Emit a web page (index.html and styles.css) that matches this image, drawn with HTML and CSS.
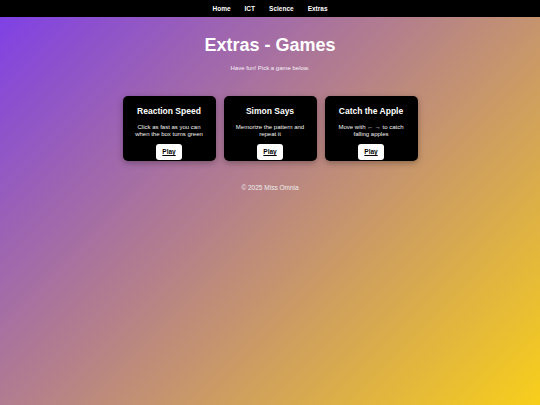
FILE: index.html
```html
<!DOCTYPE html>
<html lang="en">
<head>
<meta charset="utf-8">
<title>Extras - Games</title>
<link rel="stylesheet" href="styles.css">
</head>
<body>
<nav class="topnav">
  <a href="#" class="nav-link">Home</a>
  <a href="#" class="nav-link">ICT</a>
  <a href="#" class="nav-link">Science</a>
  <a href="#" class="nav-link">Extras</a>
</nav>
<main class="content">
  <h1 class="title">Extras - Games</h1>
  <p class="subtitle">Have fun! Pick a game below.</p>
  <section class="games">
    <div class="card">
      <h3 class="card-title">Reaction Speed</h3>
      <p class="card-text">Click as fast as you can when the box turns green</p>
      <a href="#" class="play">Play</a>
    </div>
    <div class="card">
      <h3 class="card-title">Simon Says</h3>
      <p class="card-text">Memorize the pattern and repeat it</p>
      <a href="#" class="play">Play</a>
    </div>
    <div class="card">
      <h3 class="card-title">Catch the Apple</h3>
      <p class="card-text">Move with ← → to catch falling apples</p>
      <a href="#" class="play">Play</a>
    </div>
  </section>
  <footer class="footer">© 2025 Miss Omnia</footer>
</main>
</body>
</html>
```

FILE: styles.css
```css
html, body {
  margin: 0;
  padding: 0;
}
body {
  min-height: 100vh;
  font-family: "Liberation Sans", Arial, sans-serif;
  background: linear-gradient(135deg, #7d3ee8 0%, #f7cf1a 100%);
  color: #fff;
}
.topnav {
  height: 17px;
  background: #000;
  display: flex;
  justify-content: center;
  align-items: center;
  gap: 14px;
}
.nav-link {
  color: #fff;
  font-weight: bold;
  font-size: 6.5px;
  text-decoration: none;
}
.content {
  display: flex;
  flex-direction: column;
  align-items: center;
  padding-top: 17.5px;
}
.title {
  margin: 0;
  font-size: 18px;
  line-height: 21px;
  font-weight: bold;
}
.subtitle {
  margin: 9px 0 0;
  font-size: 6px;
  line-height: 7px;
  color: #f6f2f6;
}
.games {
  margin-top: 24px;
  display: flex;
  justify-content: center;
  gap: 8px;
}
.card {
  width: 93px;
  box-sizing: border-box;
  padding: 10px 8px 1.6px;
  background: #000;
  border-radius: 5px;
  box-shadow: 0 2px 6px rgba(0, 0, 0, 0.3);
  text-align: center;
  display: flex;
  flex-direction: column;
  align-items: center;
}
.card-title {
  margin: 0 0 8.7px;
  font-size: 8.5px;
  line-height: 10px;
  font-weight: bold;
}
.card-text {
  margin: 0 0 5.5px;
  font-size: 6px;
  line-height: 7px;
  color: #f2f2f2;
}
.play {
  display: inline-block;
  background: #fff;
  color: #000;
  font-weight: bold;
  font-size: 6.5px;
  line-height: 7px;
  padding: 4.5px 6px;
  border-radius: 3px;
  text-decoration: underline;
}
.footer {
  margin-top: 23px;
  font-size: 6.5px;
  line-height: 7.5px;
  color: #eee;
}
```
